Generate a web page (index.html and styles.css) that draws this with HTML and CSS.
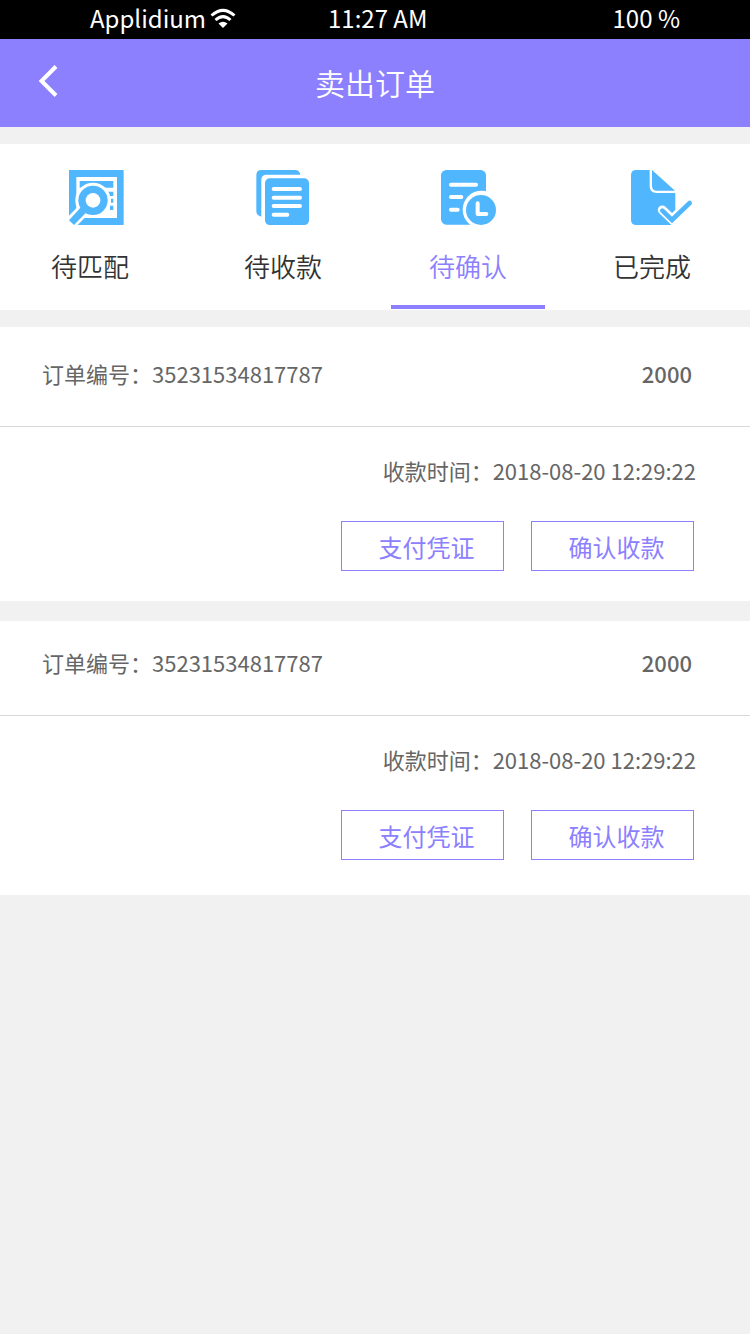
FILE: index.html
```html
<!DOCTYPE html>
<html lang="zh-CN">
<head>
<meta charset="utf-8">
<meta name="viewport" content="width=device-width, initial-scale=1">
<title>卖出订单</title>
<link rel="stylesheet" href="styles.css">
</head>
<body>
<div class="status">
  <div class="status-carrier">
    <span>Applidium</span>
    <svg class="wifi" viewBox="0 0 26 20" aria-hidden="true">
      <path d="M1.5 7.5Q13-2.800 24.500 7.500M5.500 12Q13 5.200 20.500 12" fill="none" stroke="#fff" stroke-width="3"/>
      <path d="M8.500 15.500Q13 12 17.500 15.500L13 20z" fill="#fff"/>
    </svg>
  </div>
  <div>11:27 AM</div>
  <div>100 %</div>
</div>

<header class="header">
  <button class="back" type="button" aria-label="返回">
    <svg viewBox="0 0 20 32" aria-hidden="true"><path d="M18 1.500L3.500 16L18 30.500" fill="none" stroke="#fff" stroke-width="4"/></svg>
  </button>
  <h1 class="title">卖出订单</h1>
</header>

<nav class="tabs">
  <a class="tab" href="#match">
    <svg class="tab-icon" viewBox="-15 39 270 180" aria-hidden="true">
      <path class="ink" d="M57 45H221V210H57z"/>
      <path class="paper" d="M79 66H201V189H79z"/>
      <path class="ink" d="M89 78H190V98H89zM172 110H190V123H172zM183 131H190V143H183zM180 152H190V165H180z"/>
      <circle class="paper" cx="129" cy="136" r="53"/>
      <path d="M106 160L50 216" stroke="#fff" stroke-width="38"/>
      <path class="ink" d="M94 155L110 171L72 210L57 196z"/>
      <circle class="ink" cx="129" cy="136" r="44"/>
      <circle class="paper" cx="129" cy="136" r="22"/>
    </svg>
    <span>待匹配</span>
  </a>
  <a class="tab" href="#receive">
    <svg class="tab-icon" viewBox="-6 39 270 180" aria-hidden="true">
      <path class="ink" d="M64 45H166Q178 45 181 59H78Q64 60 64 74V185Q49 182 49 169V61Q49 45 64 45z"/>
      <rect class="ink" x="75" y="70" width="132" height="140" rx="14"/>
      <path class="line" d="M101 102H180M101 128H180M101 153H180M101 179H142"/>
    </svg>
    <span>待收款</span>
  </a>
  <a class="tab active" href="#confirm" aria-current="page">
    <svg class="tab-icon" viewBox="-6 39 270 180" aria-hidden="true">
      <rect class="ink" x="48" y="45" width="135" height="164" rx="16"/>
      <path class="line" d="M78 89H153M78 126H109M78 164H98"/>
      <circle class="paper" cx="170" cy="164" r="57"/>
      <circle class="ink" cx="168" cy="165" r="45"/>
      <path class="line" d="M158 145V177H184"/>
    </svg>
    <span>待确认</span>
  </a>
  <a class="tab" href="#done">
    <svg class="tab-icon" viewBox="-9 39 270 180" aria-hidden="true">
      <path class="ink" d="M79 45H119V93Q119 114 140 114H196V210H79Q63 210 63 194V61Q63 45 79 45z"/>
      <path class="ink" d="M126 45L195 107H141Q126 107 126 92z"/>
      <path class="paper" d="M197 178V214H181z"/>
      <path d="M157 165L186 193L238 144" fill="none" stroke="#fff" stroke-width="27" stroke-linecap="round"/>
      <path d="M239 144L186 195L157 167" fill="none" stroke="#50b7ff" stroke-width="14" stroke-linecap="round"/>
    </svg>
    <span>已完成</span>
  </a>
</nav>

<main class="orders">
  <article class="order order-first">
    <div class="order-head">
      <span>订单编号：35231534817787</span>
      <span class="amount">2000</span>
    </div>
    <div class="order-body">
      <p class="time">收款时间：2018-08-20 12:29:22</p>
      <div class="actions">
        <button class="action" type="button">支付凭证</button>
        <button class="action" type="button">确认收款</button>
      </div>
    </div>
  </article>
  <article class="order order-last">
    <div class="order-head">
      <span>订单编号：35231534817787</span>
      <span class="amount">2000</span>
    </div>
    <div class="order-body">
      <p class="time">收款时间：2018-08-20 12:29:22</p>
      <div class="actions">
        <button class="action" type="button">支付凭证</button>
        <button class="action" type="button">确认收款</button>
      </div>
    </div>
  </article>
</main>
</body>
</html>
```
FILE: styles.css
```css
* {
  box-sizing: border-box;
}

body {
  margin: 0;
  background: #f1f1f1;
  color: #666;
  font-family: "Noto Sans CJK SC", sans-serif;
  font-size: 22px;
  line-height: 36px;
}

button {
  font-family: inherit;
  border: 0;
  background: none;
  cursor: pointer;
}

.status {
  display: grid;
  grid-template-columns: 238px 1fr auto;
  padding: 0 70px 3px 90px;
  background: #000;
  color: #fff;
  font-size: 24px;
}

.status-carrier {
  display: flex;
  align-items: center;
  gap: 4px;
}

.wifi {
  width: 26px;
  height: 20px;
}

.header {
  display: grid;
  grid-template-columns: 80px 1fr 80px;
  padding: 21px 0 23px;
  background: #8c80ff;
  color: #fff;
}

.back {
  display: flex;
  padding: 5px 0 0 38px;
}

.back svg {
  width: 20px;
  height: 32px;
}

.title {
  margin: 0;
  font-size: 30px;
  font-weight: 350;
  line-height: 44px;
  text-align: center;
}

.tabs {
  display: grid;
  grid-template-columns: 193fr 185fr 184fr 155fr;
  margin-top: 17px;
  padding: 0 20px 1px 13px;
  background: #fff;
}

.tab {
  display: flex;
  flex-direction: column;
  align-items: center;
  gap: 19px;
  width: 154px;
  padding: 24px 0 20px;
  border-bottom: 4px solid transparent;
  color: #333;
  font-size: 26px;
  font-weight: 350;
  line-height: 38px;
  text-decoration: none;
}

.tab.active {
  border-color: #8c80ff;
  color: #8c80ff;
}

.tab-icon {
  width: 90px;
  height: 60px;
}

.ink {
  fill: #50b7ff;
}

.paper {
  fill: #fff;
}

.line {
  fill: none;
  stroke: #fff;
  stroke-width: 12px;
  stroke-linecap: round;
  stroke-linejoin: round;
}

.orders {
  display: flex;
  flex-direction: column;
  gap: 20px;
  margin-top: 17px;
}

.order {
  background: #fff;
}

.order-first {
  padding-top: 5px;
}

.order-last {
  padding-bottom: 5px;
}

.order-head {
  display: flex;
  justify-content: space-between;
  padding: 23px 58px 35px 42px;
  border-bottom: 1px solid #d9d9d9;
}

.amount {
  font-weight: 500;
}

.order-body {
  padding: 25px 54px 30px;
}

.time {
  margin: 0;
  text-align: right;
}

.actions {
  display: flex;
  justify-content: flex-end;
  gap: 27px;
  margin-top: 33px;
  padding-right: 2px;
}

.action {
  width: 163px;
  height: 50px;
  padding: 0 0 0 8px;
  border: 1px solid #8c80ff;
  color: #8c80ff;
  font-size: 24px;
}
```
